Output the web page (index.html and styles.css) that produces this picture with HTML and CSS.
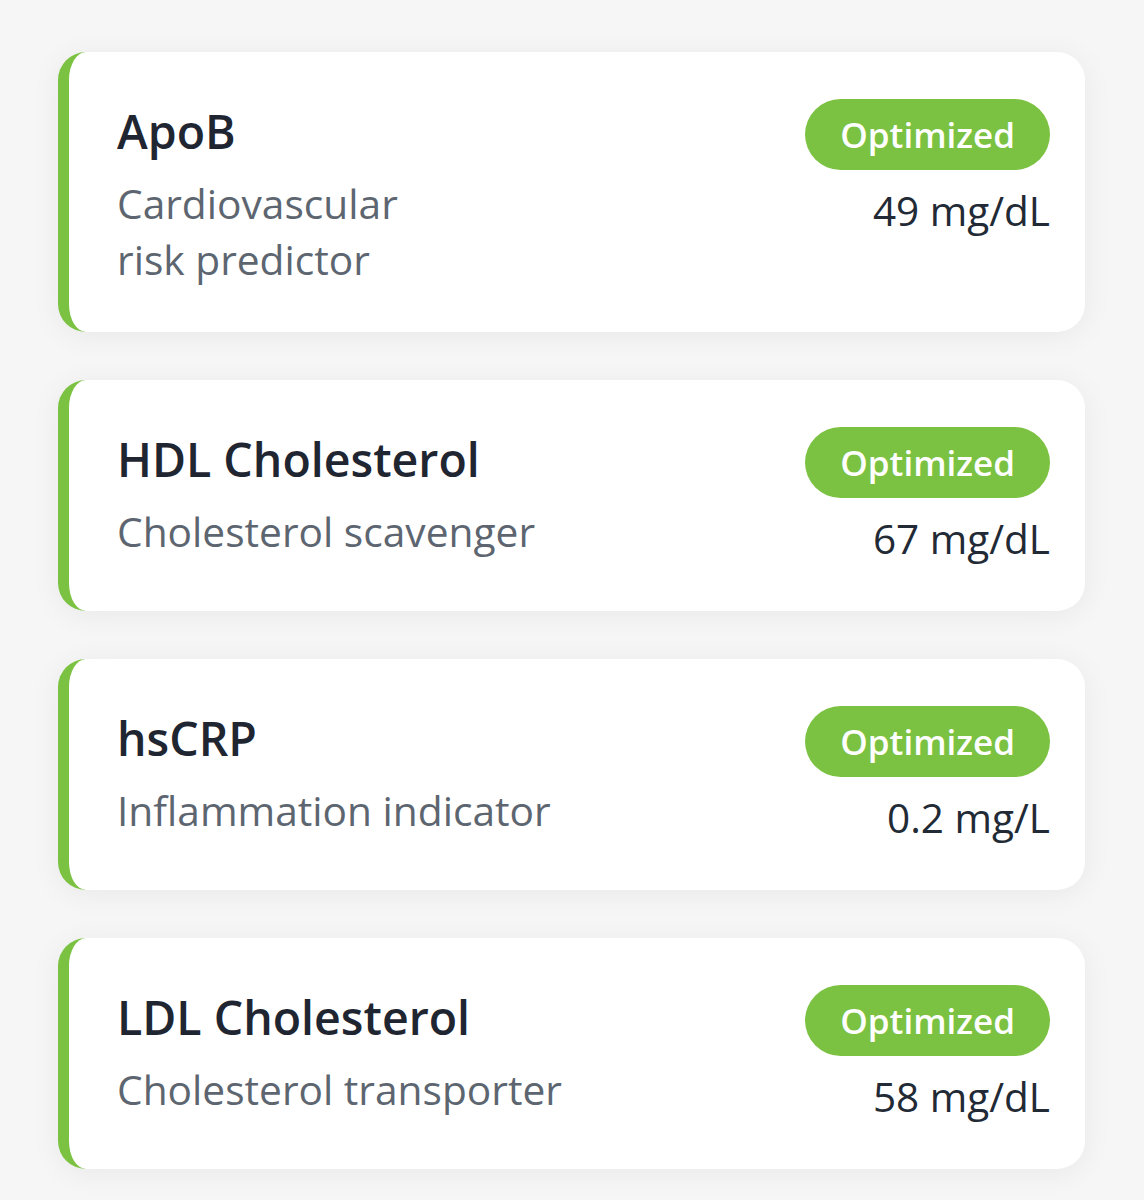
FILE: index.html
```html
<!DOCTYPE html>
<html>
<head>
    <title>Biomarkers</title>
    <meta name="viewport" content="width=device-width, initial-scale=1">
    <link rel="stylesheet" href="styles.css">
</head>

<body>
    <div class="marker-list">
        <div class="marker-card">
            <div class="marker-info">
                <div class="marker-name">ApoB</div>
                <div class="marker-desc">Cardiovascular<br>risk predictor</div>
            </div>
            <div class="marker-status">
                <span class="badge">Optimized</span>
                <div class="marker-value">49 mg/dL</div>
            </div>
        </div>

        <div class="marker-card">
            <div class="marker-info">
                <div class="marker-name">HDL Cholesterol</div>
                <div class="marker-desc">Cholesterol scavenger</div>
            </div>
            <div class="marker-status">
                <span class="badge">Optimized</span>
                <div class="marker-value">67 mg/dL</div>
            </div>
        </div>

        <div class="marker-card">
            <div class="marker-info">
                <div class="marker-name">hsCRP</div>
                <div class="marker-desc">Inflammation indicator</div>
            </div>
            <div class="marker-status">
                <span class="badge">Optimized</span>
                <div class="marker-value">0.2 mg/L</div>
            </div>
        </div>

        <div class="marker-card">
            <div class="marker-info">
                <div class="marker-name">LDL Cholesterol</div>
                <div class="marker-desc">Cholesterol transporter</div>
            </div>
            <div class="marker-status">
                <span class="badge">Optimized</span>
                <div class="marker-value">58 mg/dL</div>
            </div>
        </div>
    </div>
</body>
</html>
```

FILE: styles.css
```css
html, body {
    background-color: #f6f6f6;
    font-family: 'Open Sans', sans-serif;
    margin: 0;
    padding: 0;
}

.marker-list {
    display: flex;
    flex-direction: column;
    gap: 48px;
    padding: 52px 59px 30px 58px;
}

.marker-card {
    display: flex;
    justify-content: space-between;
    align-items: flex-start;
    background: white;
    border-left: 11px solid #7cc242;
    border-radius: 28px;
    padding: 47px 35px 45px 48px;
    box-shadow: 0px 4px 30px rgba(0, 0, 0, 0.06);
}

.marker-info {
    padding-top: 2px;
}

.marker-name {
    font-size: 46.5px;
    font-weight: 600;
    color: #1f2631;
    line-height: 60px;
}

.marker-desc {
    margin-top: 14px;
    font-size: 40.7px;
    line-height: 56px;
    color: #5d6670;
}

.marker-status {
    display: flex;
    flex-direction: column;
    align-items: flex-end;
}

.badge {
    display: inline-block;
    background-color: #7cc242;
    color: white;
    font-size: 35px;
    font-weight: 600;
    line-height: 71px;
    padding: 0 35px;
    border-radius: 36px;
}

.marker-value {
    margin-top: 13px;
    font-size: 40.5px;
    line-height: 55px;
    color: #222a35;
}
```
